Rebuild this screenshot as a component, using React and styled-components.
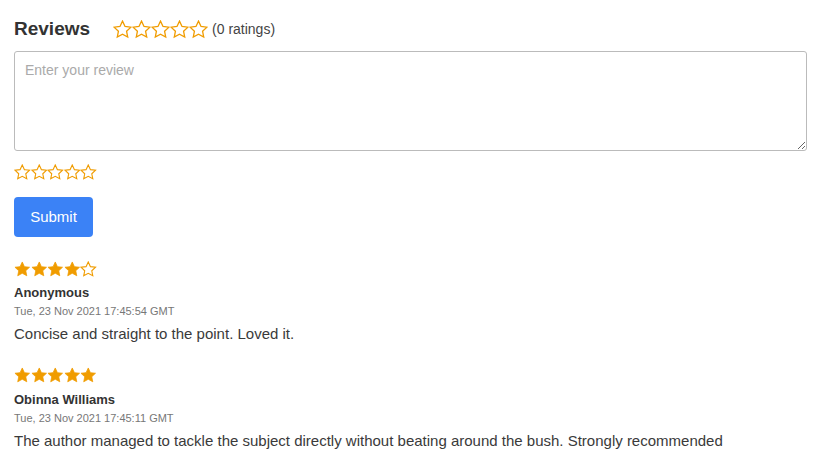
import React from "react";
import styled, { createGlobalStyle } from "styled-components";

const Global = createGlobalStyle`
  body { margin: 0; background: #fff; font-family: "Liberation Sans", Arial, sans-serif; color: #333; }
`;

const Page = styled.div`
  padding: 16px 6px 0 14px;
`;

const Header = styled.div`
  display: flex;
  align-items: center;
  gap: 23px;
  height: 26px;
`;

const Title = styled.h2`
  margin: 0;
  font-size: 19px;
  font-weight: bold;
  color: #333;
`;

const RatingSummary = styled.div`
  display: flex;
  align-items: center;
  gap: 4px;
  font-size: 14px;
  color: #444;
`;

const StarsRow = styled.div`
  display: flex;
  align-items: center;
`;

const TextArea = styled.textarea`
  display: block;
  box-sizing: border-box;
  width: 793px;
  height: 100px;
  margin-top: 9px;
  padding: 10px;
  border: 1px solid #bbb;
  border-radius: 3px;
  font-family: "Liberation Sans", Arial, sans-serif;
  font-size: 14px;
  color: #333;
  resize: vertical;
  &::placeholder { color: #aaa; }
`;

const InputStars = styled.div`
  margin-top: 13px;
`;

const SubmitButton = styled.button`
  display: block;
  margin-top: 16px;
  width: 79px;
  height: 40px;
  border: none;
  border-radius: 4px;
  background: #3b82f6;
  color: #fff;
  font-family: "Liberation Sans", Arial, sans-serif;
  font-size: 15px;
`;

const List = styled.div`
  margin-top: 24px;
  display: flex;
  flex-direction: column;
  gap: 25px;
`;

const Review = styled.div`
  display: flex;
  flex-direction: column;
`;

const Name = styled.div`
  margin-top: 8px;
  font-size: 13px;
  font-weight: bold;
  color: #333;
  line-height: 15px;
`;

const DateText = styled.div`
  margin-top: 5px;
  font-size: 11px;
  color: #777;
  line-height: 13px;
`;

const Body = styled.div`
  margin-top: 7px;
  font-size: 15px;
  color: #3a3a3a;
  line-height: 17px;
`;

const STAR = "M12 2.2l2.95 6.3 6.85.8-5.05 4.7 1.35 6.8L12 17.4l-6.1 3.4 1.35-6.8L2.2 9.3l6.85-.8z";

function Star({ size, filled }) {
  return (
    <svg width={size} height={size} viewBox="0.9 0.9 22.2 22.2" style={{ display: "block" }}>
      <path
        d={STAR}
        fill={filled ? "#f09c00" : "none"}
        stroke="#f09c00"
        strokeWidth={filled ? 1 : 1.5}
        strokeLinejoin="miter"
      />
    </svg>
  );
}

function Stars({ value = 0, size = 16 }) {
  return (
    <StarsRow>
      {[0, 1, 2, 3, 4].map((i) => (
        <Star key={i} size={size} filled={i < value} />
      ))}
    </StarsRow>
  );
}

const reviews = [
  {
    rating: 4,
    name: "Anonymous",
    date: "Tue, 23 Nov 2021 17:45:54 GMT",
    text: "Concise and straight to the point. Loved it.",
  },
  {
    rating: 5,
    name: "Obinna Williams",
    date: "Tue, 23 Nov 2021 17:45:11 GMT",
    text: "The author managed to tackle the subject directly without beating around the bush. Strongly recommended",
  },
];

export default function App() {
  return (
    <>
      <Global />
      <Page>
        <Header>
          <Title>Reviews</Title>
          <RatingSummary>
            <Stars value={0} size={19} />
            <span>(0 ratings)</span>
          </RatingSummary>
        </Header>
        <TextArea placeholder="Enter your review" />
        <InputStars>
          <Stars value={0} size={16.5} />
        </InputStars>
        <SubmitButton>Submit</SubmitButton>
        <List>
          {reviews.map((r) => (
            <Review key={r.date}>
              <Stars value={r.rating} size={16.5} />
              <Name>{r.name}</Name>
              <DateText>{r.date}</DateText>
              <Body>{r.text}</Body>
            </Review>
          ))}
        </List>
      </Page>
    </>
  );
}
